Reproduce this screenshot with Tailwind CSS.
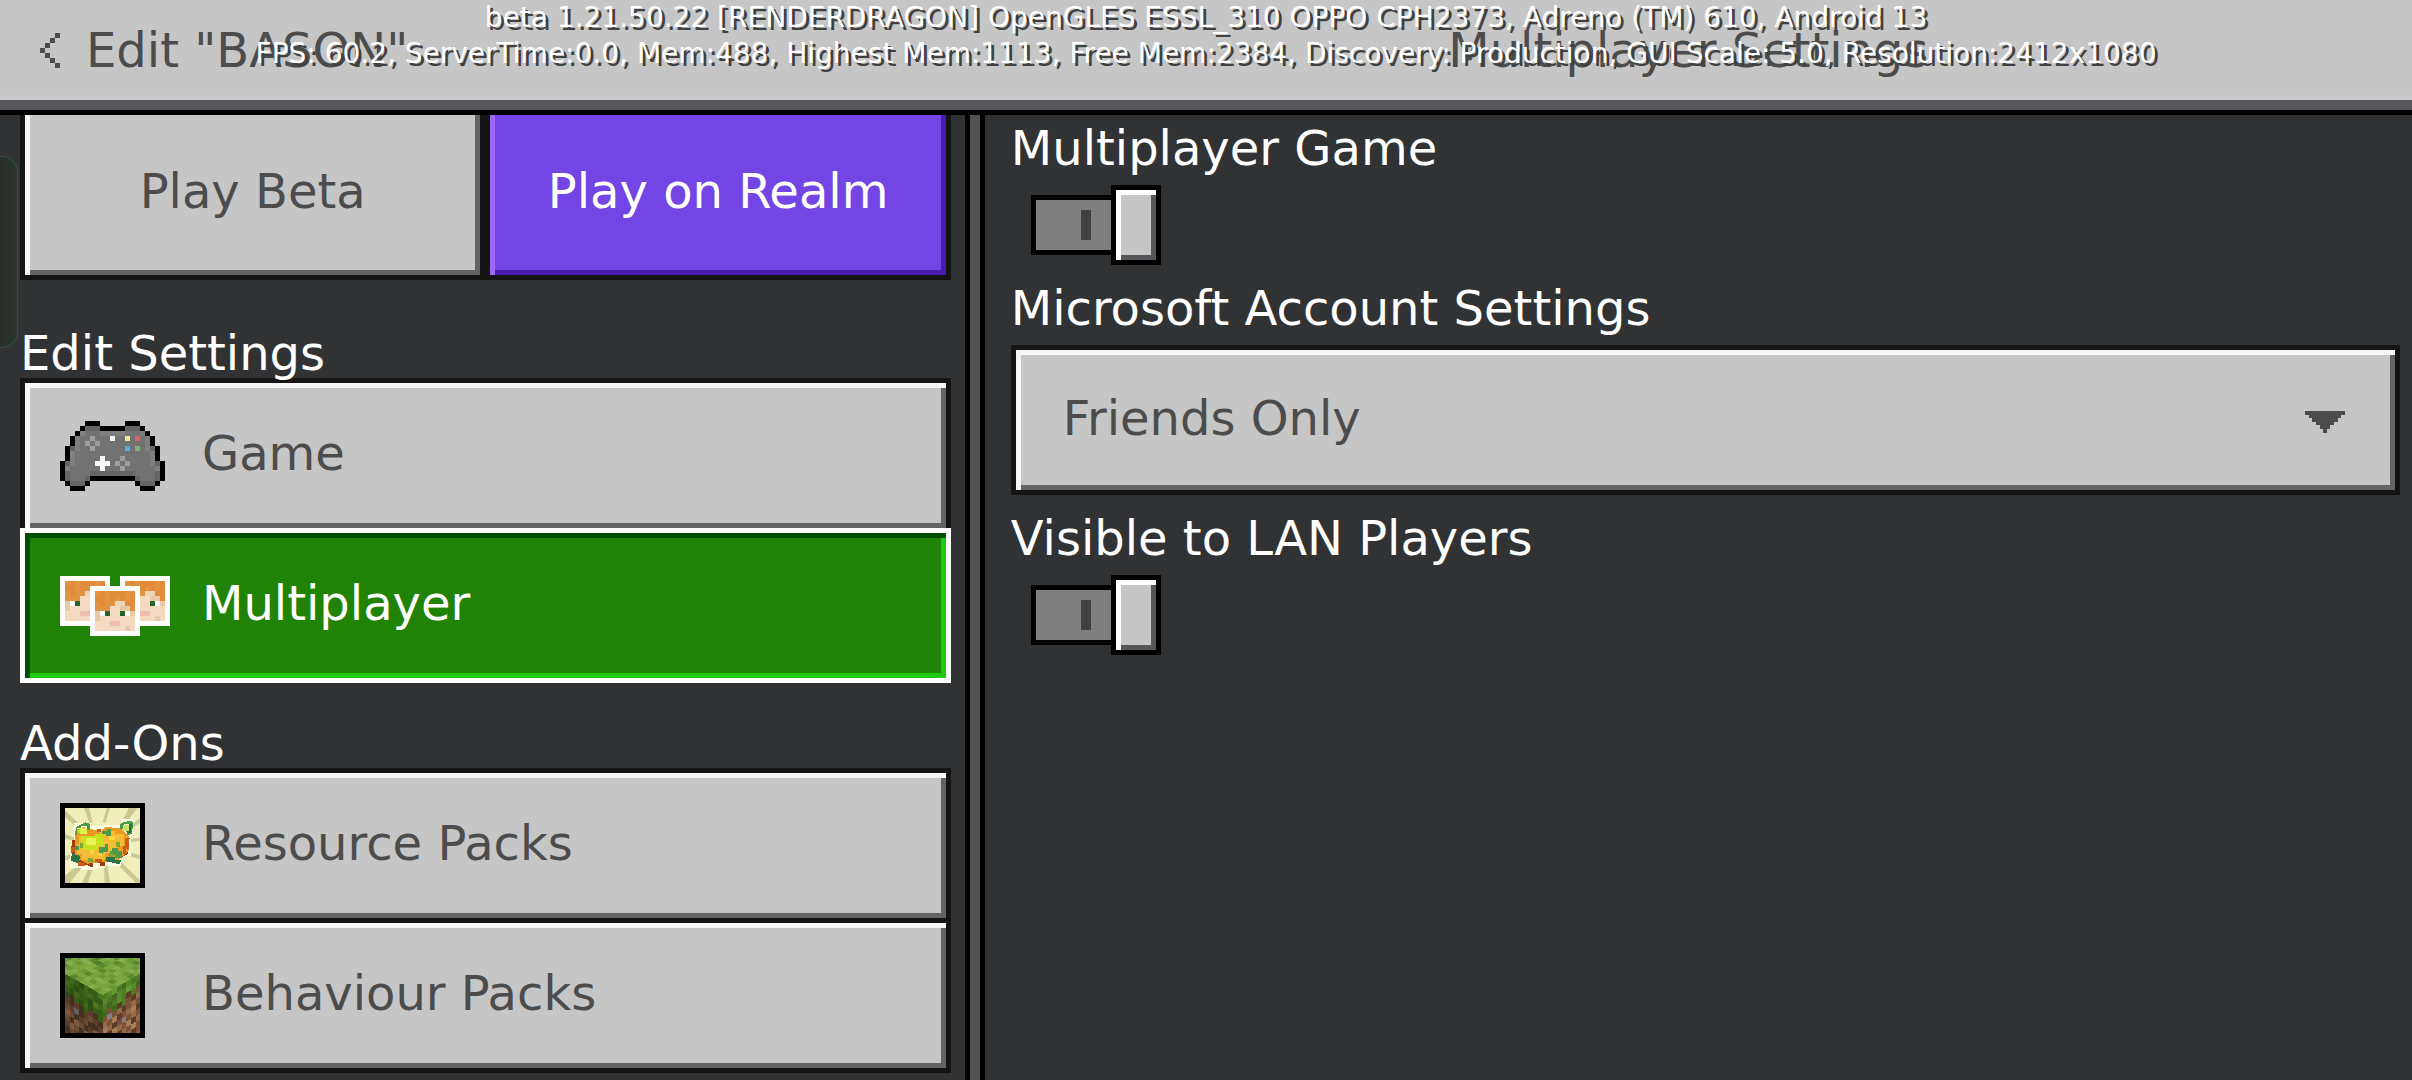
<!DOCTYPE html>
<html lang="en">
<head>
    <meta charset="UTF-8">
    <meta name="viewport" content="width=device-width, initial-scale=1.0">
    <title>Multiplayer Settings</title>
    <script src="https://cdn.jsdelivr.net/npm/@tailwindcss/browser@4"></script>
    <style>
        body {
            font-family: 'DejaVu Sans', Verdana, sans-serif;
        }
    </style>
</head>
<body class="relative flex h-screen flex-col overflow-hidden bg-[#313233] text-5xl/[50px] text-white">

    <!-- Title bar -->
    <header class="flex h-[115px] shrink-0 items-center border-b-5 border-black bg-[#c6c6c6] text-[#4c4c4c] shadow-[inset_0_-10px_0_#58565a,inset_0_-15px_0_#c8c9cb]">
        <div class="flex w-2/5 items-center gap-[26px] pb-2.5 pl-10">
            <button type="button" aria-label="Back">
                <svg class="h-[35px] w-5" viewBox="0 0 4 7" fill="#4c4c4c" shape-rendering="crispEdges"><path d="M3 0h1v1h-1zM2 1h1v1h-1zM1 2h1v1h-1zM0 3h1v1h-1zM1 4h1v1h-1zM2 5h1v1h-1zM3 6h1v1h-1z"/></svg>
            </button>
            <span>Edit "BASON"</span>
        </div>
        <h1 class="flex-1 pb-2.5 text-center">Multiplayer Settings</h1>
    </header>

    <main class="flex min-h-0 flex-1">

        <!-- Sections -->
        <nav class="w-2/5 pr-3.5 pl-5">
            <div class="grid grid-cols-2">
                <button type="button" class="h-[165px] border-5 border-t-0 border-[#141414] bg-[#c6c6c6] pb-2 text-[#4c4c4c] shadow-[inset_5px_0_0_#f7f7f7,inset_-5px_-5px_0_#656465]">Play Beta</button>
                <button type="button" class="h-[165px] border-5 border-t-0 border-[#141414] bg-[#7345e5] pb-2 shadow-[inset_5px_0_0_#a066f7,inset_-5px_-5px_0_#4a1cac]">Play on Realm</button>
            </div>

            <h2 class="mt-12">Edit Settings</h2>
            <button type="button" class="flex h-[155px] w-full items-center border-5 border-[#141414] bg-[#c6c6c6] pl-[35px] text-[#4c4c4c] shadow-[inset_5px_5px_0_#f7f7f7,inset_-5px_-5px_0_#656465]">
                <span class="w-[142px]"><svg id="icon-game" class="h-[70px] w-[105px]" viewBox="0 0 21 14" shape-rendering="crispEdges"></svg></span>
                <span class="pb-1.5">Game</span>
            </button>
            <button type="button" class="relative -mt-[5px] flex h-[155px] w-full items-center border-5 border-white bg-[#218306] pl-[35px] shadow-[inset_5px_5px_0_#004e00,inset_-5px_-5px_0_#1dcb0d]">
                <span class="w-[142px]"><svg id="icon-players" class="h-[60px] w-[110px]" viewBox="0 0 22 12" shape-rendering="crispEdges"></svg></span>
                <span class="pb-1.5">Multiplayer</span>
            </button>

            <h2 class="mt-[35px]">Add-Ons</h2>
            <button type="button" class="flex h-[155px] w-full items-center border-5 border-[#141414] bg-[#c6c6c6] pl-[35px] text-[#4c4c4c] shadow-[inset_5px_5px_0_#f7f7f7,inset_-5px_-5px_0_#656465]">
                <span class="w-[142px]">
                    <svg class="size-[85px]" viewBox="0 0 255 255">
                        <path fill="#000" d="M0 0h255v255H0z"/>
                        <path fill="#f0efbc" d="M15 15h225v225H15z"/>
                        <path fill="#c9ca91" d="M15 22l38 36-12 8-26-24zM72 15h16l10 42-10 3zM140 15h10l-14 46-8-4zM206 15h26l-36 48-10-6zM240 45v14l-32 22-2-8zM15 92l28 12-2 10-26-8zM15 158l24-4 4 8-28 10zM15 218l46-38 8 10-40 50H15zM86 194l12 2-14 44H66zM132 190l10-3 8 53h-16zM168 180l12-6 60 58v8h-12zM206 148l34 8v13l-32-10zM212 108l28-4v9l-28 5z"/>
                        <g shape-rendering="crispEdges">
                            <path fill="#fffbe0" d="M42 60h50v10h36v-5h54V48h38v54h-6v56h-30v30h-50v6h-30v8H62v-8H30v-50h10z"/>
                            <path fill="#9a3f12" d="M36 112l-3 36 12 24 16 6 38 16v-15h20v10h16v-12h24l44-24 6-48-24-10z"/>
                            <path fill="#ec9a23" d="M45 82l25-10 54 14 12-15 48 6 22 23 0 44-34 30-54 4-36 4-38-18z"/>
                            <path fill="#f6bc34" d="M56 98h64v-14h46v10h26v36h-18v20h-40v22H66v-20H50v-30h6z"/>
                            <path fill="#c9e023" d="M64 100h42v-8h22v36h-14v14H70v-14h-6zM54 80h24v10H54z"/>
                            <path fill="#e4f54e" d="M78 106h30v20H78zM60 76h22v16H60z"/>
                            <path fill="#4c9a4a" d="M48 72l28-14 14 4v18h-10V69H64v6H52v20h-6zM182 60l32-8 6 8-5 34-14 2-2-12h10V64h-16v14h-14zM126 84h14v-6h14v20h-16v-4h-12zM118 132h18v-10h9v24h-15v8h-12zM155 134h20v10h10v22h-20v-10h-14v-12h4zM44 130h14v12H44z"/>
                            <path fill="#c7e860" d="M190 66h16v18h-16z"/>
                            <path fill="#2c7247" d="M36 152l24 6-4 24-24-10zM140 162h26v10h18l-6 12-42-10zM206 62h10l-4 28h-12v-6h6z"/>
                            <path fill="#79a834" d="M84 164h16v12H84zM146 150h14v12h-14zM168 116h12v16h-12zM60 120h10v16H60z"/>
                            <path fill="#cb5d17" d="M110 78h14v10h-14zM194 104h14v34h-10v14h-8v-22h4zM34 132h10v16H34zM54 176l20 4v8H54zM105 168h22v10h-22z"/>
                            <path fill="#ffd53f" d="M146 100h18v12h-18zM110 150h16v10h-16zM90 142h12v10H90z"/>
                        </g>
                    </svg>
                </span>
                <span class="pb-1.5">Resource Packs</span>
            </button>
            <button type="button" class="-mt-[5px] flex h-[155px] w-full items-center border-5 border-[#141414] bg-[#c6c6c6] pl-[35px] text-[#4c4c4c] shadow-[inset_5px_5px_0_#f7f7f7,inset_-5px_-5px_0_#656465]">
                <span class="w-[142px]">
                    <svg class="size-[85px]" viewBox="0 0 255 255">
                        <clipPath id="block-window"><path d="M15 15h225v225H15z"/></clipPath>
                        <path fill="#000" d="M0 0h255v255H0z"/>
                        <g clip-path="url(#block-window)" shape-rendering="crispEdges">
                            <path fill="#6f9f3c" d="M15 15h225v225H15z"/>
                            <g id="block-top" transform="matrix(-14.2 -8 14.2 -8 128 126)"></g>
                            <g id="block-left" transform="matrix(14.2 8 0 17 14.4 62)"></g>
                            <g id="block-right" transform="matrix(14.2 -8 0 17 128 126)"></g>
                        </g>
                    </svg>
                </span>
                <span class="pb-1.5">Behaviour Packs</span>
            </button>
        </nav>

        <div class="w-5 shrink-0 border-x-5 border-black bg-[#535255]"></div>

        <!-- Options of the open section -->
        <section class="min-w-0 flex-1 pt-2 pr-3 pl-[26px]">
            <label class="block w-fit">
                Multiplayer Game
                <input type="checkbox" checked class="sr-only">
                <span class="mt-3 ml-5 flex items-center">
                    <span class="flex h-[60px] w-20 items-center justify-end border-5 border-r-0 border-black bg-[#7f7f7f] pr-5">
                        <span class="h-[30px] w-2.5 bg-[#404040]"></span>
                    </span>
                    <span class="h-20 w-[50px] border-5 border-black bg-[#c6c6c6] shadow-[inset_5px_5px_0_#ffffff,inset_-5px_-5px_0_#58565a]"></span>
                </span>
            </label>

            <label for="account" class="mt-[18px] block">Microsoft Account Settings</label>
            <div class="relative mt-3">
                <select id="account" class="block h-[150px] w-full appearance-none border-5 border-[#141414] bg-[#c6c6c6] pb-1 pl-[47px] leading-[60px] text-[#4c4c4c] shadow-[inset_5px_5px_0_#f7f7f7,inset_-5px_-5px_0_#656465]">
                    <option>Friends Only</option>
                    <option>Friends of Friends</option>
                    <option>Invite Only</option>
                </select>
                <svg class="pointer-events-none absolute top-[66px] right-[55px] h-[22px] w-10" viewBox="0 0 40 22" fill="#4c4c4c" shape-rendering="crispEdges"><path d="M0 0h40v4h-4v3h-3v4h-4v3h-4v4h-3v4h-4v-4h-3v-4h-4v-3h-4V7H4V4H0z"/></svg>
            </div>

            <label class="mt-[18px] block w-fit">
                Visible to LAN Players
                <input type="checkbox" checked class="sr-only">
                <span class="mt-3 ml-5 flex items-center">
                    <span class="flex h-[60px] w-20 items-center justify-end border-5 border-r-0 border-black bg-[#7f7f7f] pr-5">
                        <span class="h-[30px] w-2.5 bg-[#404040]"></span>
                    </span>
                    <span class="h-20 w-[50px] border-5 border-black bg-[#c6c6c6] shadow-[inset_5px_5px_0_#ffffff,inset_-5px_-5px_0_#58565a]"></span>
                </span>
            </label>
        </section>
    </main>

    <!-- Edge panel handle -->
    <div class="absolute top-[156px] left-0 h-48 w-[18px] rounded-r-2xl border border-l-0 border-[#2f5139] bg-linear-to-r from-[#2b2e2c] to-[#2b352d]"></div>

    <!-- Debug overlay -->
    <div class="pointer-events-none absolute inset-x-0 top-0 text-center text-[28px]/[36px] whitespace-nowrap text-shadow-[3px_3px_0_#404040]">
        <p>beta 1.21.50.22 [RENDERDRAGON] OpenGLES ESSL_310 OPPO CPH2373, Adreno (TM) 610, Android 13</p>
        <p>FPS: 60.2, ServerTime:0.0, Mem:488, Highest Mem:1113, Free Mem:2384, Discovery: Production, GUI Scale: 5.0, Resolution:2412x1080</p>
    </div>

    <script>
        // One character per pixel, '.' is transparent
        function drawPixels(id, rows, palette, dx = 0, dy = 0) {
            const target = document.getElementById(id);
            rows.forEach((row, y) => {
                [...row].forEach((key, x) => {
                    if (key === '.') return;
                    const rect = document.createElementNS('http://www.w3.org/2000/svg', 'rect');
                    rect.setAttribute('x', x + dx);
                    rect.setAttribute('y', y + dy);
                    rect.setAttribute('width', 1);
                    rect.setAttribute('height', 1);
                    rect.setAttribute('fill', palette[key]);
                    target.appendChild(rect);
                });
            });
        }

        drawPixels('icon-game', [
            '.....kkk.....kkk.....',
            '....kdddkkkkkdddk....',
            '...klbbblllllbbblk...',
            '..klbbgbbbwbbybrblk..',
            '..klbgbgbbbbbbbbblk..',
            '.kdlbbgbbbbbbubnbldk.',
            '.klbbbbbbbbbbbbbbblk.',
            '.klbbbbbwbbbgbbbbblk.',
            'kdlbbbbwwwbgbgbbbbldk',
            'klbbbbbbwbbbgbbbbbblk',
            'kdbbbbdddddddddbbbbdk',
            'kdbbbdkkkkkkkkkdbbbdk',
            '.kdddk.........kdddk.',
            '..kkk...........kkk..',
        ], { k: '#000000', b: '#727272', l: '#7f7f7f', d: '#656565', g: '#9c9fa0', w: '#f7f7f7', y: '#f5e795', r: '#e0607a', u: '#5aaee0', n: '#8fb27c' });

        const face = [
            'wwwwwwwwww',
            'wpopooopow',
            'woopopopow',
            'wpopphhoow',
            'wpppssttow',
            'wtwgssgwtw',
            'wtsssssssw',
            'wsssiisssw',
            'wsssssstsw',
            'wwwwwwwwww',
        ];
        const skin = { w: '#ffffff', o: '#e28b3a', p: '#e09440', h: '#ecd3b2', s: '#f3dac0', t: '#e6c9a6', g: '#286328', i: '#eebcb1' };
        drawPixels('icon-players', face, skin, 0, 0);
        drawPixels('icon-players', face, skin, 12, 0);
        drawPixels('icon-players', face, skin, 6, 2);

        const grass = { a: '#86ad4b', b: '#78a53f', c: '#6a9837', d: '#5b8a30', e: '#4c7b29' };
        drawPixels('block-top', [
            'bcabbcdbacbbdcab',
            'abbcabbacdbbcabd',
            'cbaabdcbbacdbbac',
            'bdbcbaabcbdbacbb',
            'abcbdcbaacbbcdab',
            'bbacbdedbbacbbcd',
            'dcbabcbedcabbdbc',
            'babcdbabbcdbcabb',
            'acbbadcbdbacbbad',
            'bbdcbbacbcbbdacb',
            'cabbdbcabdbcbbac',
            'bdcabbcbacbdbcab',
        ], grass);

        const soil = { a: '#3f681b', b: '#365c16', c: '#2c4e12', d: '#4a7821', m: '#5a3d29', n: '#6b4a33', o: '#44301f', p: '#7c593f', q: '#63605f' };
        drawPixels('block-left', [
            'babcabbd',
            'abcbaabb',
            'bcabbcda',
            'cobcacbb',
            'momobmob',
            'nmqomnmo',
            'pnomnoom',
            'nopnompn',
            'mpnopnmo',
            'onmpnomn',
            'mnonmpno',
        ], soil);
        const soilLit = { a: '#58892a', b: '#4c7a24', c: '#40691e', d: '#659a31', m: '#7b5238', n: '#93694a', o: '#593b27', p: '#a97c58', q: '#83807f' };
        drawPixels('block-right', [
            'badbcabb',
            'abcabdac',
            'bcbabobm',
            'cmcobmon',
            'mqmnomnm',
            'nmpomnpo',
            'pnomqmnm',
            'mopnmpon',
            'npmonmpm',
            'omnpmnom',
            'nmpmonpn',
            'mnompmno',
            'nmpmonpn',
        ], soilLit);
    </script>
</body>
</html>
